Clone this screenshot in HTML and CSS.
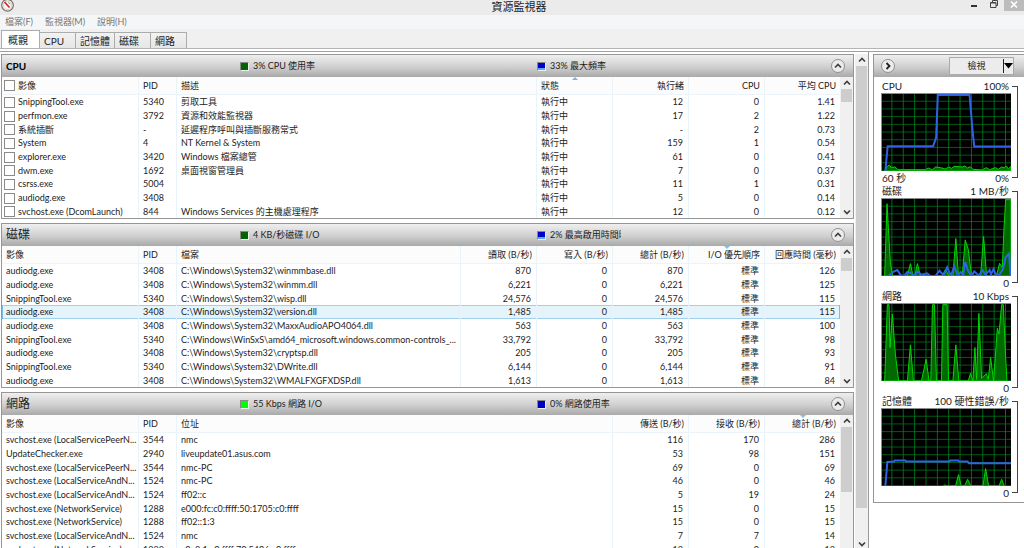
FILE: index.html
```html
<!DOCTYPE html>
<html lang="zh-Hant">
<head>
<meta charset="utf-8">
<title>資源監視器</title>
<link rel="stylesheet" href="styles.css">
</head>
<body>
<svg class="defs" aria-hidden="true">
  <symbol id="up" viewBox="0 0 8 8"><path d="M1 5.500L4 2.500L7 5.500" fill="none" stroke="#404040" stroke-width="1.700"/></symbol>
  <symbol id="down" viewBox="0 0 8 8"><path d="M1 2.500L4 5.500L7 2.500" fill="none" stroke="#404040" stroke-width="1.700"/></symbol>
  <pattern id="grid" x="-3" y="0" width="34" height="23" patternUnits="userSpaceOnUse"><path d="M33 0V23M0 22H34" stroke="#007d1c" stroke-width="3" fill="none"/></pattern>
</svg>
<div class="window">
  <header class="titlebar">
    <svg class="logo" viewBox="0 0 14 14" aria-hidden="true"><circle cx="7.500" cy="5.300" r="5.800" fill="#f8f8f8" stroke="#77706c" stroke-width="1.200"/><circle cx="7.500" cy="5.300" r="4.300" fill="none" stroke="#c9c4c0" stroke-width=".8"/><path d="M4.500 2L9.500 7.500" stroke="#d02a1c" stroke-width="1.700"/><path d="M8 2.500L10.500 4" stroke="#999"/></svg>
    <h1>資源監視器</h1>
    <div class="controls">
      <button aria-label="最小化"><svg viewBox="0 0 10 10"><path d="M2 6H8" stroke="#333" stroke-width="2"/></svg></button>
      <button aria-label="還原"><svg viewBox="0 0 10 10"><path d="M3.500 2.500V.5H8.500V5.500H7M1.500 2.500H7V7.500H1.500ZM1.500 3H7" fill="none" stroke="#444"/></svg></button>
      <button class="close" aria-label="關閉"><svg viewBox="0 0 10 10"><path d="M2 1.500L8 7.500M8 1.500L2 7.500" stroke="#fff" stroke-width="1.600"/></svg></button>
    </div>
  </header>
  <nav class="menu"><button>檔案(F)</button><button>監視器(M)</button><button>說明(H)</button></nav>
  <div class="tabs" role="tablist">
    <button role="tab" aria-selected="true">概觀</button><button role="tab">CPU</button><button role="tab">記憶體</button><button role="tab">磁碟</button><button role="tab">網路</button>
  </div>
  <div class="content">
    <main class="main">
      <div class="panels">
        <section class="panel">
          <header class="bar"><h2 class="latin">CPU</h2><span class="stat"><i class="sw green"></i>3% CPU 使用率</span><span class="stat"><i class="sw blue low"></i>33% 最大頻率</span><button class="round" aria-label="收合"><svg><use href="#up"/></svg></button></header>
          <div class="body">
            <table>
              <colgroup><col class="c-name"><col class="c-pid"><col><col class="c-num"><col class="c-num"><col class="c-num"><col class="c-num"></colgroup>
              <thead><tr><th><label><input type="checkbox">影像</label></th><th>PID</th><th>描述</th><th class="sort-up">狀態</th><th class="n">執行緒</th><th class="n">CPU</th><th class="n">平均 CPU</th></tr></thead>
              <tbody>
                <tr><td><label><input type="checkbox">SnippingTool.exe</label></td><td>5340</td><td>剪取工具</td><td>執行中</td><td class="n">12</td><td class="n">0</td><td class="n">1.41</td></tr>
                <tr><td><label><input type="checkbox">perfmon.exe</label></td><td>3792</td><td>資源和效能監視器</td><td>執行中</td><td class="n">17</td><td class="n">2</td><td class="n">1.22</td></tr>
                <tr><td><label><input type="checkbox">系統插斷</label></td><td>-</td><td>延遲程序呼叫與插斷服務常式</td><td>執行中</td><td class="n">-</td><td class="n">2</td><td class="n">0.73</td></tr>
                <tr><td><label><input type="checkbox">System</label></td><td>4</td><td>NT Kernel &amp; System</td><td>執行中</td><td class="n">159</td><td class="n">1</td><td class="n">0.54</td></tr>
                <tr><td><label><input type="checkbox">explorer.exe</label></td><td>3420</td><td>Windows 檔案總管</td><td>執行中</td><td class="n">61</td><td class="n">0</td><td class="n">0.41</td></tr>
                <tr><td><label><input type="checkbox">dwm.exe</label></td><td>1692</td><td>桌面視窗管理員</td><td>執行中</td><td class="n">7</td><td class="n">0</td><td class="n">0.37</td></tr>
                <tr><td><label><input type="checkbox">csrss.exe</label></td><td>5004</td><td></td><td>執行中</td><td class="n">11</td><td class="n">1</td><td class="n">0.31</td></tr>
                <tr><td><label><input type="checkbox">audiodg.exe</label></td><td>3408</td><td></td><td>執行中</td><td class="n">5</td><td class="n">0</td><td class="n">0.14</td></tr>
                <tr><td><label><input type="checkbox">svchost.exe (DcomLaunch)</label></td><td>844</td><td>Windows Services 的主機處理程序</td><td>執行中</td><td class="n">12</td><td class="n">0</td><td class="n">0.12</td></tr>
              </tbody>
            </table>
            <div class="scroll"><svg><use href="#up"/></svg><div class="thumb"></div><svg class="end"><use href="#down"/></svg></div>
          </div>
        </section>
        <section class="panel">
          <header class="bar"><h2>磁碟</h2><span class="stat"><i class="sw green"></i>4 KB/秒磁碟 I/O</span><span class="stat"><i class="sw blue low"></i><span class="clip">2% 最高啟用時間時</span></span><button class="round" aria-label="收合"><svg><use href="#up"/></svg></button></header>
          <div class="body">
            <table>
              <colgroup><col class="c-name"><col class="c-pid"><col><col class="c-num"><col class="c-num"><col class="c-num"><col class="c-num"><col class="c-num"></colgroup>
              <thead><tr><th>影像</th><th>PID</th><th>檔案</th><th class="n">讀取 (B/秒)</th><th class="n">寫入 (B/秒)</th><th class="n">總計 (B/秒)</th><th class="n sort-down">I/O 優先順序</th><th class="n">回應時間 (毫秒)</th></tr></thead>
              <tbody>
                <tr><td>audiodg.exe</td><td>3408</td><td>C:\Windows\System32\winmmbase.dll</td><td class="n">870</td><td class="n">0</td><td class="n">870</td><td class="n">標準</td><td class="n">126</td></tr>
                <tr><td>audiodg.exe</td><td>3408</td><td>C:\Windows\System32\winmm.dll</td><td class="n">6,221</td><td class="n">0</td><td class="n">6,221</td><td class="n">標準</td><td class="n">125</td></tr>
                <tr><td>SnippingTool.exe</td><td>5340</td><td>C:\Windows\System32\wisp.dll</td><td class="n">24,576</td><td class="n">0</td><td class="n">24,576</td><td class="n">標準</td><td class="n">115</td></tr>
                <tr class="selected"><td>audiodg.exe</td><td>3408</td><td>C:\Windows\System32\version.dll</td><td class="n">1,485</td><td class="n">0</td><td class="n">1,485</td><td class="n">標準</td><td class="n">115</td></tr>
                <tr><td>audiodg.exe</td><td>3408</td><td>C:\Windows\System32\MaxxAudioAPO4064.dll</td><td class="n">563</td><td class="n">0</td><td class="n">563</td><td class="n">標準</td><td class="n">100</td></tr>
                <tr><td>SnippingTool.exe</td><td>5340</td><td>C:\Windows\WinSxS\amd64_microsoft.windows.common-controls_...</td><td class="n">33,792</td><td class="n">0</td><td class="n">33,792</td><td class="n">標準</td><td class="n">98</td></tr>
                <tr><td>audiodg.exe</td><td>3408</td><td>C:\Windows\System32\cryptsp.dll</td><td class="n">205</td><td class="n">0</td><td class="n">205</td><td class="n">標準</td><td class="n">93</td></tr>
                <tr><td>SnippingTool.exe</td><td>5340</td><td>C:\Windows\System32\DWrite.dll</td><td class="n">6,144</td><td class="n">0</td><td class="n">6,144</td><td class="n">標準</td><td class="n">91</td></tr>
                <tr><td>audiodg.exe</td><td>3408</td><td>C:\Windows\System32\WMALFXGFXDSP.dll</td><td class="n">1,613</td><td class="n">0</td><td class="n">1,613</td><td class="n">標準</td><td class="n">84</td></tr>
              </tbody>
            </table>
            <div class="scroll"><svg><use href="#up"/></svg><div class="thumb"></div><svg class="end"><use href="#down"/></svg></div>
          </div>
        </section>
        <section class="panel">
          <header class="bar"><h2>網路</h2><span class="stat"><i class="sw lime"></i>55 Kbps 網路 I/O</span><span class="stat"><i class="sw blue"></i>0% 網路使用率</span><button class="round" aria-label="收合"><svg><use href="#up"/></svg></button></header>
          <div class="body">
            <table>
              <colgroup><col class="c-name"><col class="c-pid"><col><col class="c-num"><col class="c-num"><col class="c-num"></colgroup>
              <thead><tr><th>影像</th><th>PID</th><th>位址</th><th class="n">傳送 (B/秒)</th><th class="n">接收 (B/秒)</th><th class="n sort-down">總計 (B/秒)</th></tr></thead>
              <tbody>
                <tr><td>svchost.exe (LocalServicePeerN...</td><td>3544</td><td>nmc</td><td class="n">116</td><td class="n">170</td><td class="n">286</td></tr>
                <tr><td>UpdateChecker.exe</td><td>2940</td><td>liveupdate01.asus.com</td><td class="n">53</td><td class="n">98</td><td class="n">151</td></tr>
                <tr><td>svchost.exe (LocalServicePeerN...</td><td>3544</td><td>nmc-PC</td><td class="n">69</td><td class="n">0</td><td class="n">69</td></tr>
                <tr><td>svchost.exe (LocalServiceAndN...</td><td>1524</td><td>nmc-PC</td><td class="n">46</td><td class="n">0</td><td class="n">46</td></tr>
                <tr><td>svchost.exe (LocalServiceAndN...</td><td>1524</td><td>ff02::c</td><td class="n">5</td><td class="n">19</td><td class="n">24</td></tr>
                <tr><td>svchost.exe (NetworkService)</td><td>1288</td><td>e000:fc:c0:ffff:50:1705:c0:ffff</td><td class="n">15</td><td class="n">0</td><td class="n">15</td></tr>
                <tr><td>svchost.exe (NetworkService)</td><td>1288</td><td>ff02::1:3</td><td class="n">15</td><td class="n">0</td><td class="n">15</td></tr>
                <tr><td>svchost.exe (LocalServiceAndN...</td><td>1524</td><td>nmc</td><td class="n">7</td><td class="n">7</td><td class="n">14</td></tr>
                <tr><td>svchost.exe (NetworkService)</td><td>1288</td><td>c0a8:1:c0:ffff:70:5406:c0:ffff</td><td class="n">13</td><td class="n">0</td><td class="n">13</td></tr>
              </tbody>
            </table>
            <div class="scroll"><svg><use href="#up"/></svg><div class="thumb tall"></div><svg class="end"><use href="#down"/></svg></div>
          </div>
        </section>
      </div>
      <div class="scroll outer"><svg><use href="#up"/></svg><div class="thumb full"></div><svg><use href="#down"/></svg></div>
    </main>
    <aside class="side">
      <header class="bar sidebar-bar">
        <button class="round" aria-label="隱藏圖表"><svg viewBox="0 0 8 8"><path d="M2.500 1L5.500 4L2.500 7" fill="none" stroke="#222" stroke-width="1.800"/></svg></button>
        <button class="view"><span>檢視</span><svg viewBox="0 0 9 6" aria-hidden="true"><path d="M0 0H9L4.500 5.500Z" fill="#000"/></svg></button>
      </header>
      <div class="charts">
        <figure>
          <div class="cap"><span>CPU</span><span>100%</span></div>
          <svg class="chart" viewBox="0 0 386 230" preserveAspectRatio="none"><rect width="386" height="230" fill="#000"/><rect width="386" height="230" fill="url(#grid)"/>
            <path class="area" d="M10 230L14 218L22 212L28 220L38 218L48 226H130L140 221L150 227L160 218L175 220L190 224L200 218L208 222L216 216L240 218L248 215L256 221L264 217L272 225L300 227L312 220L322 226L340 220L348 225L358 218L366 221L372 215L378 224L386 216V230Z"/>
            <path class="line" d="M10 230L17 156H153L162 130L167 3H262L271 110L276 157H386"/></svg>
          <div class="cap foot"><span>60 秒</span><span>0%</span></div>
        </figure>
        <figure>
          <div class="cap"><span>磁碟</span><span>1 MB/秒</span></div>
          <svg class="chart" viewBox="0 0 386 230" preserveAspectRatio="none"><rect width="386" height="230" fill="#000"/><rect width="386" height="230" fill="url(#grid)"/>
            <path class="area" d="M8 230L15 14L25 190L32 230H76L85 193L93 230H98L106 193L115 230H180L190 210L200 230H212L221 118L229 230H240L249 122L258 150L268 230H295L304 112L313 230H342L352 192L360 205L365 90L370 2H386V230Z"/>
            <path class="line" d="M20 230L32 218L46 212L56 228L66 230L76 218L88 222L98 230L106 216L118 226L135 222L145 230L160 230L172 214L184 228L195 204L206 230L216 201L226 228L236 218L243 228L249 188L258 216L268 230L276 216L290 229L300 212L310 226L322 212L326 225L334 209L342 230L352 225L362 210L370 174L380 163L385 230"/></svg>
          <div class="cap foot"><span></span><span>0</span></div>
        </figure>
        <figure>
          <div class="cap"><span>網路</span><span>10 Kbps</span></div>
          <svg class="chart" viewBox="0 0 386 230" preserveAspectRatio="none"><rect width="386" height="230" fill="#000"/><rect width="386" height="230" fill="url(#grid)"/>
            <path class="area" d="M8 230L16 2H21L24 130L31 30L40 150L50 230H76L85 122L94 230H118L132 165L141 230H146L151 2H157L163 230H178L182 2H195L199 230H212L221 122L230 230H258L265 207L272 230L278 130L283 225L290 28L298 222L312 208L318 225L325 160L334 230L345 72L350 90L358 2H363L370 160L374 230Z"/></svg>
          <div class="cap foot"><span></span><span>0</span></div>
        </figure>
        <figure>
          <div class="cap"><span>記憶體</span><span>100 硬性錯誤/秒</span></div>
          <svg class="chart" viewBox="0 0 386 230" preserveAspectRatio="none"><rect width="386" height="230" fill="#000"/><rect width="386" height="230" fill="url(#grid)"/>
            <path class="area" d="M184 230L188 226L192 230H220L229 196L237 230H247L256 210L266 230H302L310 178L319 230H350L358 210L366 230Z"/>
            <path class="line" d="M10 230L16 158L36 157L38 154H70L72 157H202L204 154H228L230 157H256L260 162H386"/></svg>
          <div class="cap foot"><span></span><span>0</span></div>
        </figure>
      </div>
    </aside>
  </div>
</div>
</body>
</html>
```
FILE: styles.css
```css
* { box-sizing: border-box; }
body {
  margin: 0;
  color: #1c1c1c;
  background: #fff;
  font: 9px/12px Lato, "Noto Sans CJK TC", sans-serif;
}
button {
  margin: 0;
  padding: 0;
  border: 0;
  background: none;
  color: inherit;
  font: inherit;
}
h1, h2, figure { margin: 0; font-weight: normal; }
svg { display: block; }
.defs { position: absolute; width: 0; height: 0; }
.window { display: flex; flex-direction: column; height: 100vh; overflow: hidden; }

.titlebar {
  display: grid;
  grid-template-columns: 1fr auto 1fr;
  height: 15px;
  flex: none;
  background: #ebebeb;
}
.logo { width: 14px; height: 14px; }
.titlebar h1 { padding-left: 14px; font-size: 11px; line-height: 14px; }
.controls { display: flex; justify-content: flex-end; }
.controls button { display: flex; justify-content: center; width: 20px; height: 11px; }
.controls svg { width: 10px; height: 10px; }
.controls .close { background: #bcbcbc; }

.menu {
  display: flex;
  gap: 12px;
  height: 14px;
  flex: none;
  padding-left: 5px;
  background: #f5f6f7;
  color: #777;
}
.tabs {
  display: flex;
  align-items: flex-end;
  height: 20px;
  flex: none;
  padding-left: 1px;
  border-bottom: 1px solid #b4b4b4;
  background: #f0f0f0;
}
.tabs button {
  min-width: 36px;
  height: 16px;
  padding: 0 4px;
  border: 1px solid #acacac;
  border-width: 1px 1px 0 0;
  background: linear-gradient(#f2f2f2, #e6e6e6);
  font-size: 10px;
  line-height: 14px;
  text-align: left;
}
.tabs button[aria-selected] {
  min-width: 39px;
  height: 18px;
  padding: 0 6px;
  border-left-width: 1px;
  background: #fff;
}

.content { display: flex; flex: 1; min-height: 0; margin-top: 2px; border-top: 1px solid #a0a0a0; }
.main { display: flex; flex: 1; min-width: 0; padding-left: 1px; border-right: 1px solid #999; }
.panels { display: flex; flex: 1; min-width: 0; flex-direction: column; gap: 4px; padding-top: 2px; }
.panel { flex: none; border: 1px solid #969696; }
.bar {
  display: grid;
  grid-template-columns: 234px 297px 1fr auto;
  align-items: center;
  height: 22px;
  padding: 0 8px 0 4px;
  background: linear-gradient(#efefef, #cfcfcf 55%, #a9a9a9);
}
.bar h2 { font-size: 12px; line-height: 20px; }
.bar .latin { color: #000; font-size: 10px; font-weight: bold; }
.stat { display: flex; align-items: center; gap: 4px; white-space: nowrap; }
.clip { width: 71px; overflow: hidden; }
.sw { width: 9px; height: 9px; border: 1px solid #888; border-right-color: #eee; border-bottom-color: #eee; }
.green { background: #006400; }
.lime { background: #0f0; }
.blue { background: #0000c0; }
.low { background: linear-gradient(#0000c8 70%, #55aaff 70%); }
.round {
  display: grid;
  place-items: center;
  width: 14px;
  height: 14px;
  border: 1px solid #909090;
  border-radius: 50%;
  background: #ececec;
}
.round svg { width: 8px; height: 8px; }

.body { display: flex; }
table { flex: 1; width: 0; border-spacing: 0; table-layout: fixed; }
.c-name { width: 136px; }
.c-pid { width: 38px; }
.c-num { width: 76px; }
th, td {
  padding: 0 5px 0 4px;
  border-left: 1px solid #e8f3fa;
  overflow: hidden;
  font-weight: normal;
  text-align: left;
  white-space: nowrap;
}
th:first-child, td:first-child { padding: 0 0 0 3px; border-left-color: transparent; }
th { position: relative; height: 18px; padding-right: 4px; border-bottom: 1px solid #edf4f9; background: #fcfcfd; }
td { height: 14px; }
tr:nth-child(3n) td { height: 13px; }
.n { text-align: right; }
label { display: flex; align-items: center; gap: 3px; margin-left: -2px; }
input {
  flex: none;
  appearance: none;
  width: 11px;
  height: 11px;
  margin: 0;
  border: 1px solid #8a8a8a;
  background: #fff;
}
.sort-up::before, .sort-down::before {
  content: "";
  position: absolute;
  top: 0;
  left: calc(50% - 3px);
  border: 3px solid transparent;
  border-top-width: 0;
  border-bottom: 3px solid #7fb2d6;
}
.sort-down::before { border-top: 3px solid #85bfe2; border-bottom-width: 0; }
.selected td { background: #e5f3fb; box-shadow: inset 0 1px #9fd0ee, inset 0 -1px #9fd0ee; }
.selected td:first-child { border-left-color: #70c0e7; }
.selected td:last-child { border-right: 1px solid #70c0e7; padding-right: 4px; }

.scroll {
  display: flex;
  flex: none;
  flex-direction: column;
  align-items: center;
  width: 13px;
  background: #f0f0f0;
}
.scroll svg { width: 8px; height: 12px; flex: none; }
.scroll .end { margin-top: auto; }
.thumb { width: 11px; height: 13px; background: #cdcdcd; }
.tall { height: 65px; }
.outer { margin: 2px 0 0 1px; }
.full { height: auto; flex: 1; margin-bottom: 32px; }
.outer svg:last-child { height: 8px; }

.side {
  flex: none;
  align-self: flex-start;
  width: 151px;
  margin: 2px 0 0 4px;
  border: 1px solid #969696;
  border-right: 0;
}
.side .sidebar-bar { display: flex; justify-content: space-between; padding: 0 10px 0 7px; }
.view {
  display: flex;
  align-items: center;
  width: 65px;
  height: 18px;
  border: 1px solid #aaa;
  background: #ececec;
}
.view span { flex: 1; }
.view svg { width: 10px; height: 14px; border-left: 1px solid #222; }
.charts { display: grid; gap: 1px; padding: 3px 13px 3px 7px; }
figure { position: relative; }
figure::after {
  content: "";
  position: absolute;
  top: 6px;
  right: -7px;
  bottom: 6px;
  width: 5px;
  border: 1px solid #444;
  border-left: 0;
}
.cap { display: flex; justify-content: space-between; height: 13px; padding: 0 2px 0 1px; font-size: 10px; line-height: 12px; }
.cap.foot { padding-top: 1px; }
.chart { width: 100%; height: 78px; border: 1px solid #8c8c8c; border-right-width: 0; border-bottom-width: 0; }
.area { fill: #006a00; stroke: #00d800; stroke-width: 1px; vector-effect: non-scaling-stroke; }
.line { fill: none; stroke: #2f62e6; stroke-width: 2px; vector-effect: non-scaling-stroke; }
```
